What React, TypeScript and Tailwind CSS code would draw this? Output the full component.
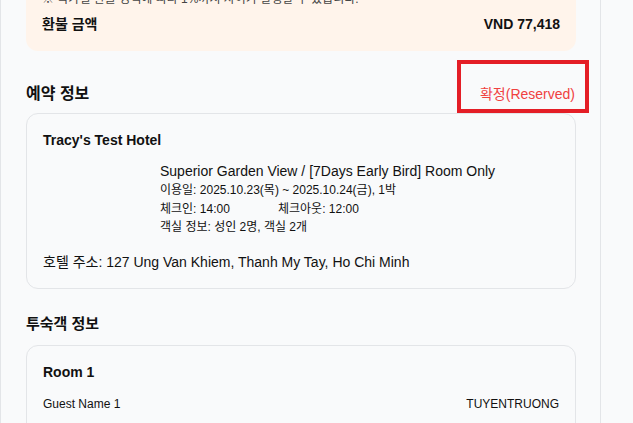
import React from "react";

export default function App() {
  return (
    <div className="relative h-[423px] w-full overflow-hidden bg-[#f9fafb] font-[family-name:'Liberation_Sans','Noto_Sans_CJK_KR',sans-serif] text-[#111]">
      <div className="flow-root h-[423px] w-[601px] border-x border-[#e3e5e8] bg-[#f9fafb] pl-[25px] pr-[24px]">
        {/* refund card */}
        <div className="-mt-[26px] w-[550px] rounded-xl bg-[#fff4eb] px-4 pt-4 pb-[17px]">
          <p className="text-[12px] leading-[18px] text-[#444]">
            ※ 국가별 환율 정책에 따라 1%까지 차이가 발생할 수 있습니다.
          </p>
          <div className="mt-1.5 flex items-center justify-between text-[14px] leading-5 font-bold">
            <span>환불 금액</span>
            <span>VND 77,418</span>
          </div>
        </div>

        {/* reservation info */}
        <div className="mt-[31px] flex w-[550px] items-center justify-between">
          <h2 className="text-[16px] leading-6 font-bold">예약 정보</h2>
          <span className="pr-[1px] text-[14px] leading-6 text-[#f0413f]">확정(Reserved)</span>
        </div>
        <div className="mt-[7px] w-[550px] rounded-xl border border-[#e3e5e8] p-4">
          <div className="text-[14px] leading-5 font-bold">Tracy's Test Hotel</div>
          <div className="mt-[11px] flex gap-4">
            <div className="w-[101px] shrink-0" />
            <div>
              <div className="text-[14px] leading-5">Superior Garden View / [7Days Early Bird] Room Only</div>
              <div className="text-[12px] leading-[18.5px]">
                <div>이용일: 2025.10.23(목) ~ 2025.10.24(금), 1박</div>
                <div className="flex">
                  <span className="w-[118px]">체크인: 14:00</span>
                  <span>체크아웃: 12:00</span>
                </div>
                <div>객실 정보: 성인 2명, 객실 2개</div>
              </div>
            </div>
          </div>
          <div className="mt-[15px] text-[14px] leading-5">
            호텔 주소: 127 Ung Van Khiem, Thanh My Tay, Ho Chi Minh
          </div>
        </div>

        {/* guest info */}
        <h2 className="mt-6 text-[15px] leading-[22px] font-bold">투숙객 정보</h2>
        <div className="mt-[10px] w-[550px] rounded-xl border border-[#e3e5e8] px-4 pt-4 pb-10">
          <div className="text-[14px] leading-5 font-bold">Room 1</div>
          <div className="mt-3 flex items-center justify-between text-[12px] leading-5">
            <span>Guest Name 1</span>
            <span>TUYENTRUONG</span>
          </div>
        </div>
      </div>

      {/* annotation box */}
      <div className="absolute left-[457px] top-[60px] h-[53px] w-[132px] border-[4.5px] border-[#e41e26]" />
    </div>
  );
}
